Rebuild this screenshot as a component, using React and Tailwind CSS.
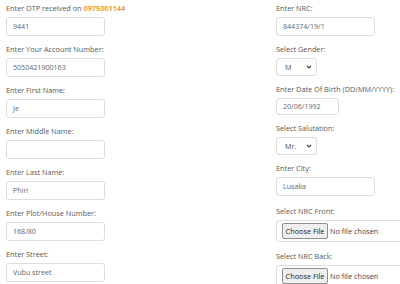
import React from "react";

function Field({ label, children, className = "" }) {
  return (
    <div className={`flex flex-col mb-[6px] ${className}`}>
      <label className="h-[14px] leading-[14px] text-[7.3px] text-[#585858] mb-[2px] whitespace-nowrap">{label}</label>
      {children}
    </div>
  );
}

function TextInput({ value, w = "w-[99px]", h = "h-[19px]" }) {
  return (
    <div className={`${w} ${h} shrink-0 border border-[#dcdcdc] rounded-[3px] bg-white px-[6px] flex items-center text-[7.1px] text-[#666]`}>
      {value}
    </div>
  );
}

function SelectBox({ value }) {
  return (
    <div className="w-[41px] h-[18px] border border-[#dcdcdc] rounded-[3px] bg-white pl-[8px] pr-[4px] flex items-center justify-between text-[7.2px] text-[#555]">
      <span>{value}</span>
      <svg width="6" height="4" viewBox="0 0 6 4" fill="none">
        <path d="M1 1l2 2L5 1" stroke="#444" strokeWidth="1.1" />
      </svg>
    </div>
  );
}

function FileBox() {
  return (
    <div className="w-[140px] h-[22px] border border-[#dcdcdc] rounded-[3px] bg-white pl-[5px] flex items-center gap-[2px] text-[7.3px] whitespace-nowrap">
      <span className="h-[16px] w-[46px] justify-center flex items-center border border-[#8f8f8f] rounded-[2px] bg-[#efefef] text-[#222]">Choose File</span>
      <span className="text-[#444]">No file chosen</span>
    </div>
  );
}

export default function App() {
  return (
    <div className="w-[400px] h-[284px] overflow-hidden bg-white pt-[1px] flex font-['Open_Sans',sans-serif]">
      <div className="w-[270px] shrink-0 pl-[6px] flex flex-col">
        <Field label={<>Enter OTP received on <span className="text-[#f0a030] font-bold">0975001144</span></>}>
          <TextInput value="9441" />
        </Field>
        <Field label="Enter Your Account Number:">
          <TextInput value="5050421900163" />
        </Field>
        <Field label="Enter First Name:">
          <TextInput value="Je" />
        </Field>
        <Field label="Enter Middle Name:">
          <TextInput value="" />
        </Field>
        <Field label="Enter Last Name:">
          <TextInput value="Phiri" />
        </Field>
        <Field label="Enter Plot/House Number:">
          <TextInput value="168/80" />
        </Field>
        <Field label="Enter Street:">
          <TextInput value="Vubu street" />
        </Field>
      </div>
      <div className="shrink-0 pl-[6px] flex flex-col">
        <Field label="Enter NRC:">
          <TextInput value="844374/19/1" />
        </Field>
        <Field label="Select Gender:">
          <SelectBox value="M" />
        </Field>
        <Field label="Enter Date Of Birth (DD/MM/YYYY):">
          <TextInput value="20/06/1992" w="w-[63px]" h="h-[17px]" />
        </Field>
        <Field label="Select Salutation:">
          <SelectBox value="Mr." />
        </Field>
        <Field label="Enter City:">
          <TextInput value="Lusaka" />
        </Field>
        <Field label="Select NRC Front:" className="mt-[2px]">
          <FileBox />
        </Field>
        <Field label="Select NRC Back:" className="mt-[1px]">
          <FileBox />
        </Field>
      </div>
    </div>
  );
}
